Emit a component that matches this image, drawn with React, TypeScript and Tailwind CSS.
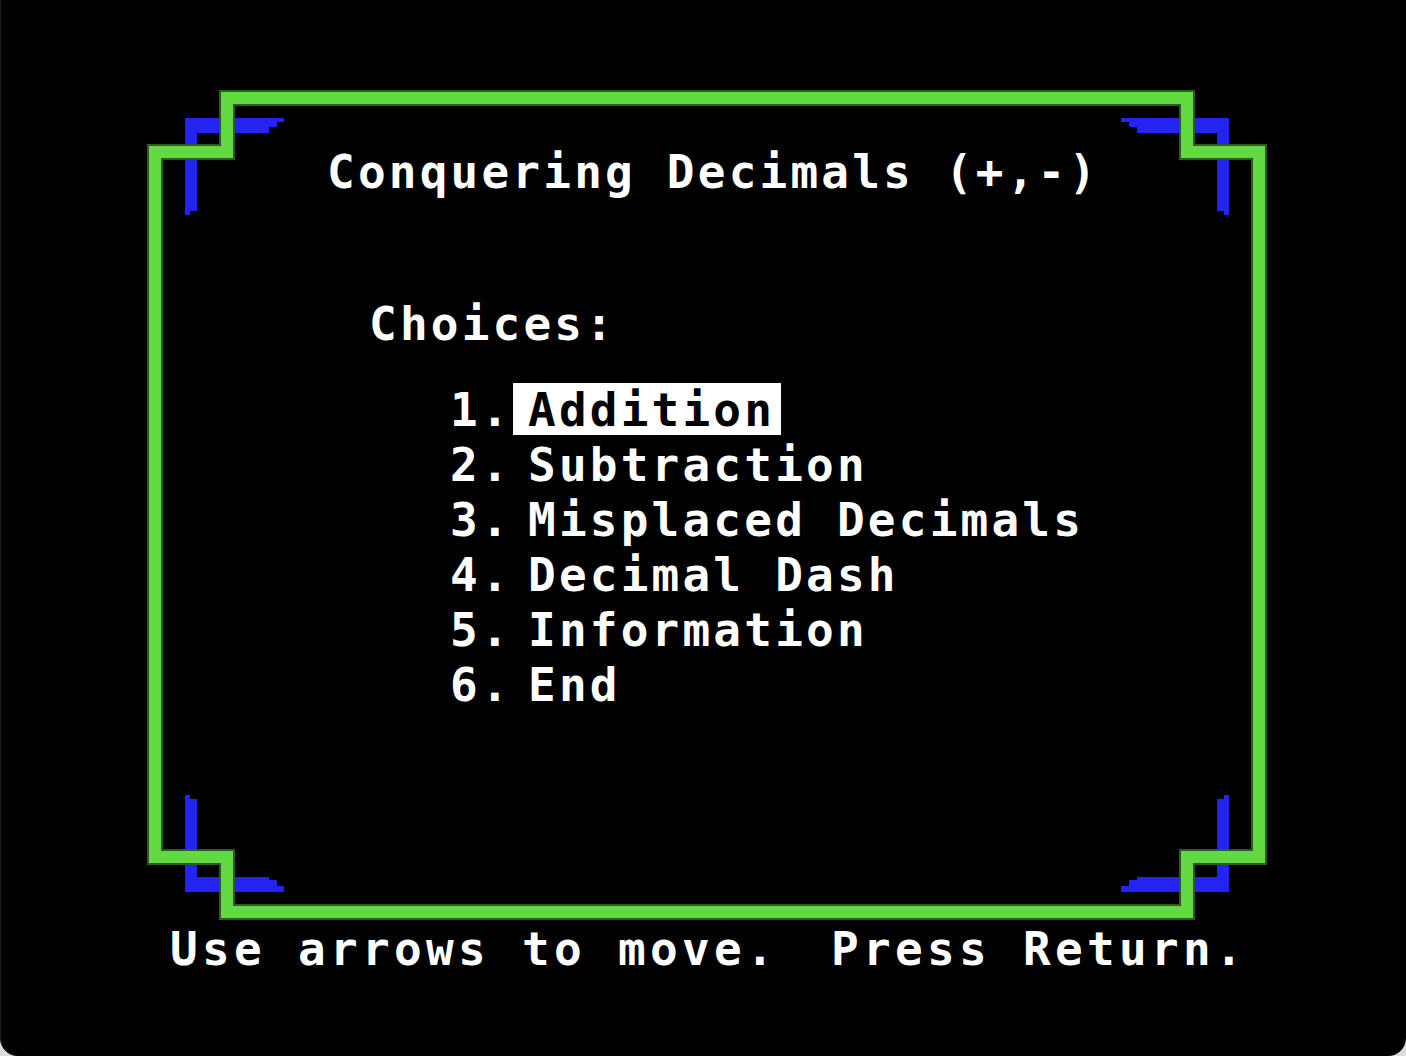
import React from "react";

const GREEN = "#63d941";
const GREEN_EDGE = "#2b5c20";
const BLUE = "#2323f2";

const frame =
  "M226 98 L1186 98 L1186 152 L1258 152 L1258 857 L1186 857 L1186 912 L226 912 L226 857 L154 857 L154 152 L226 152 Z";

// blue corner brackets, the long arm ends in a little staircase
const brackets = [
  "M184 118 L283 118 L283 122 L276 122 L276 127 L268 127 L268 133 L196 133 L196 211 L189 211 L189 215 L184 215 Z",
  "M1228 118 L1120 118 L1120 122 L1128 122 L1128 127 L1136 127 L1136 133 L1216 133 L1216 211 L1223 211 L1223 215 L1228 215 Z",
  "M184 892 L283 892 L283 886 L276 886 L276 880 L268 880 L268 877 L196 877 L196 799 L189 799 L189 795 L184 795 Z",
  "M1228 892 L1120 892 L1120 886 L1128 886 L1128 880 L1136 880 L1136 877 L1216 877 L1216 799 L1223 799 L1223 795 L1228 795 Z",
];

const items = [
  "Addition",
  "Subtraction",
  "Misplaced Decimals",
  "Decimal Dash",
  "Information",
  "End",
];

function Frame() {
  return (
    <svg
      className="absolute inset-0 pointer-events-none"
      width="1406"
      height="1056"
      viewBox="0 0 1406 1056"
    >
      {brackets.map((d, i) => (
        <path key={i} d={d} fill={BLUE} />
      ))}
      <path d={frame} fill="none" stroke={GREEN_EDGE} strokeWidth="16" strokeLinejoin="miter" />
      <path d={frame} fill="none" stroke={GREEN} strokeWidth="12" strokeLinejoin="miter" />
    </svg>
  );
}

export default function App() {
  return (
    <div className="bg-[#dedede] w-[1406px] h-[1056px]">
      <div className="relative w-[1406px] h-[1056px] bg-black rounded-b-[18px] border-l border-[#1c1c1c] overflow-hidden">
        <Frame />
        <div className="relative pt-[145px] text-white font-['DejaVu_Sans_Mono',monospace] font-bold text-[46px] leading-[55px] tracking-[3.2px] whitespace-pre">
          <div className="pl-[326px]">Conquering Decimals (+,-)</div>
          <div className="pl-[368px] mt-[97px]">Choices:</div>
          <div className="mt-[31px] flex flex-col">
            {items.map((label, i) => (
              <div key={label} className="flex h-[55px] pl-[449px]">
                <span className="w-[63px]">{i + 1}.</span>
                <span
                  className={
                    i === 0
                      ? "block h-[52px] w-[268px] pl-[15px] bg-white text-black"
                      : "block pl-[15px]"
                  }
                >
                  {label}
                </span>
              </div>
            ))}
          </div>
          <div className="flex mt-[209px] tracking-[4.3px]">
            <span className="pl-[169px] w-[830px]">Use arrows to move.</span>
            <span>Press Return.</span>
          </div>
        </div>
      </div>
    </div>
  );
}
